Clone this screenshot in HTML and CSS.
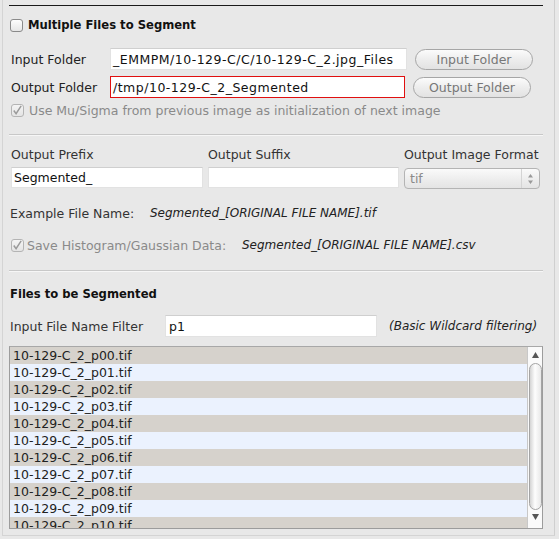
FILE: index.html
```html
<!DOCTYPE html>
<html>
<head>
<meta charset="utf-8">
<link rel="stylesheet" href="styles.css">
</head>
<body>
<div class="panel">
  <div class="content">
    <div class="rule-dark"></div>
    <div class="row row-multi">
      <span class="cb"></span>
      <span class="bold">Multiple Files to Segment</span>
    </div>
    <div class="row row-folder first">
      <span class="lbl lbl-folder">Input Folder</span>
      <span class="field field-path">_EMMPM/10-129-C/C/10-129-C_2.jpg_Files</span>
      <span class="btn">Input Folder</span>
    </div>
    <div class="row row-folder">
      <span class="lbl lbl-folder">Output Folder</span>
      <span class="field field-path field-err">/tmp/10-129-C_2_Segmented</span>
      <span class="btn">Output Folder</span>
    </div>
    <div class="row row-mu">
      <span class="cb cb-dis"><svg viewBox="0 0 13 13" width="13" height="13"><path d="M3 6.5 L5.5 10 L11 1.5" fill="none" stroke="#9a9a9a" stroke-width="1.6"/></svg></span>
      <span class="dis">Use Mu/Sigma from previous image as initialization of next image</span>
    </div>
    <div class="rule-light sep1"></div>
    <div class="grid3">
      <span class="lbl">Output Prefix</span>
      <span class="lbl">Output Suffix</span>
      <span class="lbl">Output Image Format</span>
      <span class="field">Segmented_</span>
      <span class="field"></span>
      <span class="combo"><span class="combo-text">tif</span><span class="combo-arrows"><svg viewBox="0 0 7 12" width="7" height="12"><path d="M3.5 1 L6 4.5 L1 4.5 Z M3.5 11 L6 7.5 L1 7.5 Z" fill="#999"/></svg></span></span>
    </div>
    <div class="row row-example">
      <span class="lbl ex-lbl">Example File Name:</span>
      <span class="ital">Segmented_[ORIGINAL FILE NAME].tif</span>
    </div>
    <div class="row row-save">
      <span class="cb cb-dis"><svg viewBox="0 0 13 13" width="13" height="13"><path d="M3 6.5 L5.5 10 L11 1.5" fill="none" stroke="#9a9a9a" stroke-width="1.6"/></svg></span>
      <span class="dis save-lbl">Save Histogram/Gaussian Data:</span>
      <span class="ital">Segmented_[ORIGINAL FILE NAME].csv</span>
    </div>
    <div class="rule-light sep2"></div>
    <div class="row row-files">
      <span class="bold">Files to be Segmented</span>
    </div>
    <div class="row row-filter">
      <span class="lbl filter-lbl">Input File Name Filter</span>
      <span class="field filter-field">p1</span>
      <span class="ital">(Basic Wildcard filtering)</span>
    </div>
    <div class="list">
      <div class="items">
        <div class="item">10-129-C_2_p00.tif</div>
        <div class="item">10-129-C_2_p01.tif</div>
        <div class="item">10-129-C_2_p02.tif</div>
        <div class="item">10-129-C_2_p03.tif</div>
        <div class="item">10-129-C_2_p04.tif</div>
        <div class="item">10-129-C_2_p05.tif</div>
        <div class="item">10-129-C_2_p06.tif</div>
        <div class="item">10-129-C_2_p07.tif</div>
        <div class="item">10-129-C_2_p08.tif</div>
        <div class="item">10-129-C_2_p09.tif</div>
        <div class="item">10-129-C_2_p10.tif</div>
      </div>
      <div class="scroll">
        <svg class="arr" viewBox="0 0 7 6" width="7" height="6"><path d="M3.5 0 L7 6 L0 6 Z" fill="#555"/></svg>
        <div class="thumb"></div>
        <svg class="arr" viewBox="0 0 7 6" width="7" height="6"><path d="M0 0 L7 0 L3.5 6 Z" fill="#555"/></svg>
      </div>
    </div>
  </div>
</div>
</body>
</html>
```
FILE: styles.css
```css
* { box-sizing: border-box; }
html, body { margin: 0; padding: 0; }
body {
  background: #e8e8e8;
  font-family: "DejaVu Sans", "Noto Sans", sans-serif;
  font-size: 12.5px;
  color: #222;
  width: 559px;
  height: 539px;
  overflow: hidden;
}
.panel {
  margin-left: 2px;
  width: 553px;
  height: 536px;
  border-left: 1px solid #d4d4d4;
  border-right: 1px solid #cfcfcf;
  border-bottom: 1px solid #d4d4d4;
  background: #e8e8e8;
}
.content {
  margin-left: 6px;
  width: 534px;
  display: flex;
  flex-direction: column;
}
.rule-dark {
  margin-top: 5px;
  height: 1px;
  background: #1a1a1a;
}
.rule-light {
  height: 2px;
  border-top: 1px solid #c8c8c8;
  border-bottom: 1px solid #f6f6f6;
}
.row {
  display: flex;
  align-items: center;
}
.bold { font-weight: bold; color: #111; font-size: 11.6px; }
.row-multi { margin-top: 12px; height: 14px; gap: 5px; padding-left: 1px; }
.cb {
  width: 13px;
  height: 13px;
  border: 1px solid #8a8a8a;
  border-radius: 3px;
  background: linear-gradient(#fdfdfd, #e6e6e6);
  display: inline-flex;
  flex: none;
}
.cb-dis { border-color: #b4b4b4; background: linear-gradient(#f4f4f4, #e4e4e4); }
.cb svg { display: block; margin: -1px 0 0 -1px; }
.row-folder { height: 22px; }
.row-folder.first { margin-top: 16px; margin-bottom: 6px; }
.lbl { color: #222; }
.lbl-folder { width: 101px; padding-left: 2px; }
.field {
  height: 21px;
  background: #fff;
  border: 1px solid #e2e2e2;
  border-top-color: #cfcfcf;
  display: flex;
  align-items: center;
  padding-left: 2px;
  color: #111;
  white-space: nowrap;
  overflow: hidden;
}
.field-path { width: 297px; height: 22px; letter-spacing: 0.5px; }
.field-err { border: 1px solid #e01010; width: 295px; }
.btn {
  margin-left: 8px;
  width: 118px;
  height: 21px;
  border: 1px solid #a6a6a6;
  border-radius: 11px;
  background: linear-gradient(#fbfbfb, #ececec 55%, #e2e2e2);
  color: #777;
  display: flex;
  align-items: center;
  justify-content: center;
}
.row-mu { margin-top: 5px; height: 14px; gap: 5px; padding-left: 2px; }
.dis { color: #8a8a8a; }
.sep1 { margin-top: 17px; }
.grid3 {
  margin-top: 10px;
  display: grid;
  grid-template-columns: 192px 191px 136px;
  column-gap: 5px;
  row-gap: 4px;
  padding-left: 2px;
  grid-template-rows: 17px 21px;
}
.grid3 .lbl { color: #333; align-self: center; }
.grid3 .field { padding-left: 2px; }
.combo {
  height: 21px;
  margin-top: 1px;
  border: 1px solid #b4b4b4;
  border-radius: 4px;
  background: linear-gradient(#fafafa, #ececec 60%, #e4e4e4);
  display: flex;
  align-items: center;
}
.combo-text { flex: 1; padding-left: 5px; color: #8a8a8a; }
.combo-arrows {
  width: 18px;
  height: 100%;
  border-left: 1px solid #d4d4d4;
  display: flex;
  align-items: center;
  justify-content: center;
}
.row-example { margin-top: 18px; height: 14px; padding-left: 1px; }
.ex-lbl { width: 140px; color: #333; }
.ital { font-style: italic; color: #222; font-size: 12px; }
.row-save { margin-top: 18px; height: 14px; padding-left: 2px; }
.save-lbl { margin-left: 3px; width: 215px; }
.sep2 { margin-top: 18px; }
.row-files { margin-top: 15px; height: 14px; padding-left: 1px; }
.row-filter { margin-top: 14px; height: 22px; padding-left: 1px; }
.filter-lbl { width: 155px; color: #333; }
.filter-field { width: 212px; height: 22px; padding-left: 3px; }
.row-filter .ital { margin-left: 12px; }
.list {
  margin-top: 9px;
  height: 183px;
  border: 1px solid #9c9c9c;
  border-top-color: #a8a8a8;
  display: flex;
  overflow: hidden;
}
.items { flex: 1; }
.item {
  height: 17px;
  line-height: 17px;
  padding-left: 3px;
  color: #222;
  background: #d6d2cc;
  white-space: nowrap;
}
.item:nth-child(even) { background: #ebf2fe; }
.scroll {
  width: 15px;
  background: #fafafa;
  border-left: 1px solid #c8c8c8;
  display: flex;
  flex-direction: column;
  align-items: center;
}
.scroll .arr { margin-top: 5px; flex: none; }
.scroll .arr:last-child { margin-top: 4px; }
.thumb {
  margin-top: 5px;
  width: 13px;
  height: 147px;
  border: 1px solid #a4a4a4;
  border-radius: 7px;
  background: linear-gradient(90deg, #d4d4d4, #fdfdfd 45%, #e8e8e8);
}
```
